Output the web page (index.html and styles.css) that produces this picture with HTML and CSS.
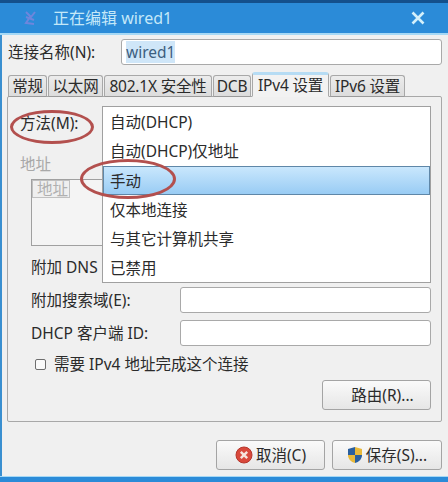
FILE: index.html
```html
<!DOCTYPE html>
<html lang="zh">
<head>
<meta charset="utf-8">
<title>正在编辑 wired1</title>
<link rel="stylesheet" href="styles.css">
</head>
<body>
<div class="window">
  <header class="titlebar">
    <svg class="app-icon" width="14" height="16" viewBox="0 0 14 16"><path d="M3 2 L8 7 L12 2 M7 7 L3 13 L11 14 M3 7 L11 10" fill="none" stroke="#7f86dd" stroke-width="2"/></svg>
    <span class="title">正在编辑 wired1</span>
    <svg class="close" width="14" height="14" viewBox="0 0 14 14"><path d="M1.5 1.5 L12.5 12.5 M12.5 1.5 L1.5 12.5" stroke="#d3f0fb" stroke-width="2.6"/></svg>
  </header>
  <main class="content">
    <div class="name-row">
      <label class="name-label">连接名称(N):</label>
      <div class="name-input"><span class="selected">wired1</span></div>
    </div>
    <nav class="tabs">
      <span class="tab t1">常规</span>
      <span class="tab t2">以太网</span>
      <span class="tab t3">802.1X 安全性</span>
      <span class="tab t4">DCB</span>
      <span class="tab active">IPv4 设置</span>
      <span class="tab t6">IPv6 设置</span>
    </nav>
    <section class="panel">
      <div class="method-label">方法(M):</div>
      <div class="addr-label">地址</div>
      <div class="addr-box"><div class="addr-head">地址</div></div>
      <div class="form-row dns"><span>附加 DNS</span><div class="field"></div></div>
      <div class="form-row"><span>附加搜索域(E):</span><div class="field"></div></div>
      <div class="form-row"><span>DHCP 客户端 ID:</span><div class="field"></div></div>
      <label class="check-row"><span class="box"></span>需要 IPv4 地址完成这个连接</label>
      <div class="route-row"><button class="btn route">路由(R)...</button></div>

      <ul class="dropdown">
        <li>自动(DHCP)</li>
        <li>自动(DHCP)仅地址</li>
        <li class="hl">手动</li>
        <li>仅本地连接</li>
        <li>与其它计算机共享</li>
        <li>已禁用</li>
      </ul>
      <div class="mark mark-a"></div>
      <div class="mark mark-b"></div>
    </section>
    <footer class="actions">
      <button class="btn action cancel">
        <svg width="18" height="18" viewBox="0 0 18 18"><circle cx="9" cy="9" r="8" fill="#d9483b" stroke="#b5362c"/><path d="M5.8 5.8 L12.2 12.2 M12.2 5.8 L5.8 12.2" stroke="#f6e3dc" stroke-width="2.4"/></svg>
        取消(C)
      </button>
      <button class="btn action save">
        <svg width="16" height="18" viewBox="0 0 16 18"><path d="M8 1 L15 3 V9 H8 Z" fill="#e8b93a"/><path d="M8 1 L1 3 V9 H8 Z" fill="#2a5f9e"/><path d="M8 9 H15 C15 13 12 16 8 17 Z" fill="#2a5f9e"/><path d="M8 9 V17 C4 16 1 13 1 9 Z" fill="#e8b93a"/></svg>
        保存(S)...
      </button>
    </footer>
  </main>
  <div class="bottom-edge"></div>
</div>
</body>
</html>
```
FILE: styles.css
```css
* { box-sizing: border-box; }
html, body { margin: 0; padding: 0; }
body {
  width: 448px;
  height: 482px;
  overflow: hidden;
  background: #f0f0f0;
  color: #2b2b2b;
  font-family: "Noto Sans", "Noto Sans CJK SC", sans-serif;
  font-size: 15.5px;
  line-height: 20px;
}
.window {
  display: flex;
  flex-direction: column;
  height: 482px;
  border-left: 2px solid #3a8fd0;
}
.titlebar {
  flex: none;
  height: 35px;
  display: flex;
  align-items: center;
  padding: 0 0 0 21px;
  background: #2b8bd8;
  border-top: 3px solid #14508c;
  border-bottom: 2px solid #a5d8f5;
  margin-left: -2px;
}
.app-icon { margin: 0 0 0 2px; opacity: .8; }
.title { margin-left: 16px; color: #c4e8f8; font-size: 16px; }
.close { margin-left: auto; margin-right: 23px; }
.content {
  flex: 1;
  display: flex;
  flex-direction: column;
  padding: 4px 6px 0 5px;
  min-height: 0;
}
.name-row { display: flex; align-items: center; height: 26px; }
.name-label { width: 114px; padding-left: 1px; white-space: nowrap; }
.name-input {
  flex: 1;
  height: 26px;
  background: #fff;
  border: 1px solid #a9a9a9;
  border-radius: 3px;
  padding: 2px 4px;
  color: #3d5f80;
}
.selected { background: #cfe6f8; }
.tabs {
  display: flex;
  align-items: flex-end;
  height: 32px;
  margin-bottom: -1px;
  position: relative;
  z-index: 1;
  padding-left: 1px;
  letter-spacing: -0.2px;
}
.tab {
  height: 22px;
  line-height: 21px;
  text-align: center;
  white-space: nowrap;
  background: linear-gradient(#ececec, #dcdcdc);
  border: 1px solid #a8a8a8;
  border-bottom-color: #9a9a9a;
  border-radius: 3px 3px 0 0;
  margin-right: 1px;
}
.t1 { width: 39px; }
.t2 { width: 55px; }
.t3 { width: 108px; }
.t4 { width: 38px; }
.active {
  width: 77px;
  height: 25px;
  line-height: 21px;
  background: #f2f2f2;
  border-top: 3px solid #b6dcf4;
  border-bottom-color: #f2f2f2;
}
.t6 { width: 75px; }
.panel {
  position: relative;
  height: 326px;
  flex: none;
  border: 1px solid #a8a8a8;
  border-radius: 2px;
  padding: 0 10px 0 23px;
  background: #f0f0f0;
}
.method-label { position: absolute; left: 12px; top: 16px; white-space: nowrap; }
.addr-label { margin: 57px 0 0 -11px; color: #a8a8a8; }
.addr-box {
  height: 67px;
  margin-top: 5px;
  border: 1px solid #a0a0a0;
  background: #f4f4f4;
}
.addr-head {
  width: 38px;
  height: 18px;
  line-height: 16px;
  padding-left: 4px;
  color: #b0b0b0;
  border: 1px solid #c0c0c0;
  background: #efefef;
}
.form-row {
  display: flex;
  align-items: center;
  justify-content: space-between;
  height: 26px;
  margin-top: 7px;
  white-space: nowrap;
}
.form-row.dns { margin-top: 8px; }
.field {
  width: 251px;
  height: 26px;
  background: #fff;
  border: 1px solid #a9a9a9;
  border-radius: 3px;
}
.check-row {
  display: flex;
  align-items: center;
  gap: 8px;
  margin: 8px 0 0 4px;
  white-space: nowrap;
}
.box {
  width: 11px;
  height: 11px;
  border: 1px solid #6e6e6e;
  border-radius: 2px;
  background: #fafafa;
}
.route-row { display: flex; justify-content: flex-end; margin-top: 6px; }
.btn {
  font: inherit;
  color: #2b2b2b;
  background: linear-gradient(#fafafa, #e6e6e6);
  border: 1px solid #a4a4a4;
  border-radius: 3px;
}
.route { width: 109px; height: 30px; padding: 0 0 0 12px; }
.dropdown {
  position: absolute;
  left: 94px;
  top: 9px;
  width: 329px;
  height: 177px;
  margin: 0;
  padding: 0;
  list-style: none;
  background: #fff;
  border: 1px solid #a0a0a0;
}
.dropdown li {
  height: 29px;
  line-height: 31px;
  padding-left: 7px;
}
.dropdown .hl {
  background: linear-gradient(#cbe8fd, #97cbf4);
  outline: 1px solid #5f87a8;
  outline-offset: -1px;
  margin-top: 1px;
}
.mark {
  position: absolute;
  border: 3px solid #b3504e;
  border-radius: 50%;
}
.mark-a { left: 2px; top: 13px; width: 84px; height: 34px; }
.mark-b { left: 72px; top: 62px; width: 96px; height: 40px; }
.actions {
  flex: none;
  display: flex;
  justify-content: flex-end;
  gap: 7px;
  margin-top: 18px;
}
.action {
  height: 30px;
  display: flex;
  align-items: center;
  justify-content: center;
  gap: 3px;
  padding: 0;
}
.cancel { width: 109px; }
.save { width: 110px; }
.bottom-edge {
  flex: none;
  height: 6px;
  margin: auto 0 0 -2px;
  background: #2b8bd8;
  border-top: 1px solid #a5d8f5;
}
```
